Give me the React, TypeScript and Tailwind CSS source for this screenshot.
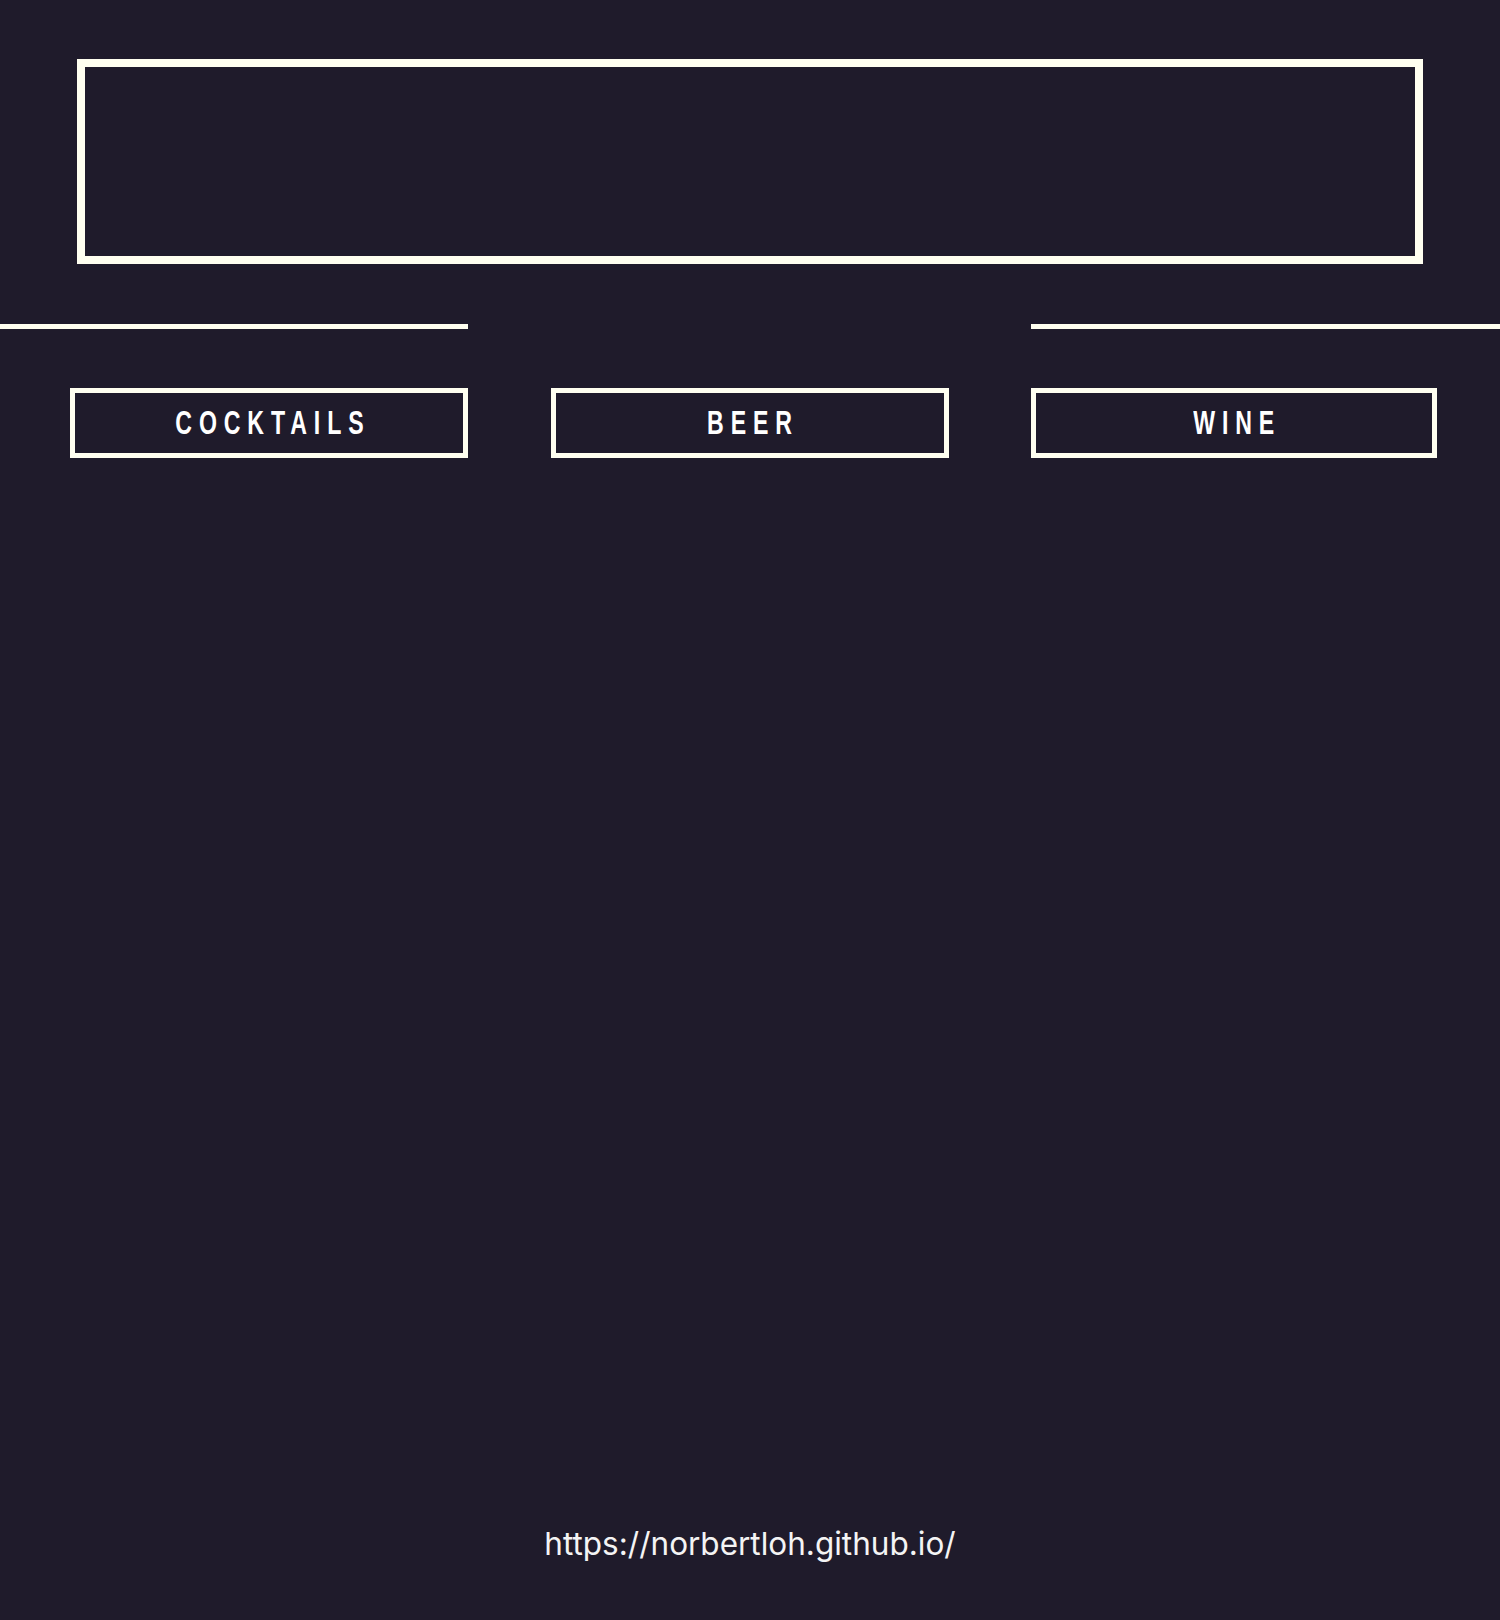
import React from "react";

const btnFont = {
  fontFamily: '"Liberation Sans", Arial, sans-serif',
};

function NavButton({ label, className }: { label: string; className: string }) {
  return (
    <button
      className={
        "h-[70px] border-[5px] border-[#fffff0] text-white flex items-center justify-center overflow-hidden " +
        className
      }
    >
      <span className="inline-block scale-x-[0.69] font-bold text-[33.5px] leading-none tracking-[10px] pl-[10px]">
        {label}
      </span>
    </button>
  );
}

export default function App() {
  return (
    <div className="w-[1500px] h-[1620px] bg-[#1f1b2b] flex flex-col">
      <header className="pt-[59px] px-[77px]">
        <div className="h-[205px] border-[8px] border-[#fffff0]" />
      </header>
      <div className="mt-[60px] flex h-[5px]">
        <div className="w-[468px] bg-[#fffff0]" />
        <div className="flex-1" />
        <div className="w-[469px] bg-[#fffff0]" />
      </div>
      <nav className="mt-[59px] flex" style={btnFont}>
        <NavButton label="COCKTAILS" className="ml-[70px] w-[398px]" />
        <NavButton label="BEER" className="ml-[83px] w-[398px]" />
        <NavButton label="WINE" className="ml-[82px] w-[406px]" />
      </nav>
      <div className="flex-1" />
      <footer className="pb-[56px] flex justify-center">
        <span
          className="text-[#f4f4f4] text-[31.5px] leading-[40px]"
          style={{ fontFamily: '"Inter", "Open Sans", sans-serif', fontWeight: 400 }}
        >
          https://norbertloh.github.io/
        </span>
      </footer>
    </div>
  );
}
